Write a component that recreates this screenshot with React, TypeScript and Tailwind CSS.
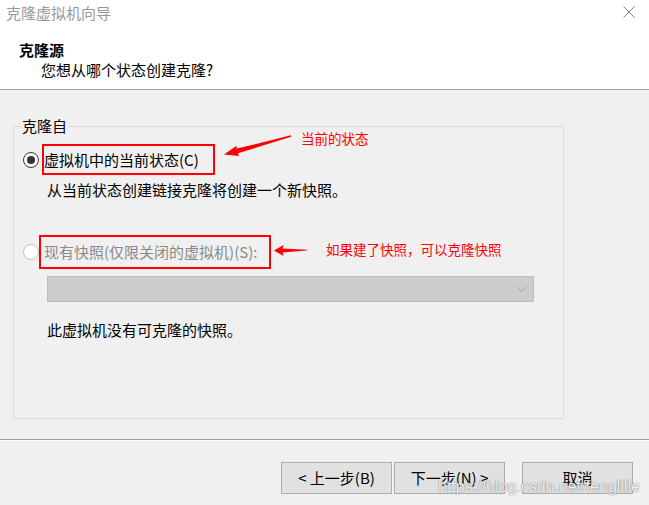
import React from 'react';

function Radio({ checked, disabled }: { checked?: boolean; disabled?: boolean }) {
  return (
    <div
      className={`w-4 h-4 shrink-0 rounded-full flex items-center justify-center ${
        disabled ? 'border border-[#c4c4c4] bg-white' : 'border-[1.5px] border-[#333333] bg-white'
      }`}
    >
      {checked && <div className="w-[8px] h-[8px] rounded-full bg-[#333333]" />}
    </div>
  );
}

function WizardButton({ label }: { label: string }) {
  return (
    <button className="w-[111px] h-[32px] bg-[#e1e1e1] border border-[#adadad] text-[15px] leading-[20px] text-black">
      {label}
    </button>
  );
}

export default function App() {
  return (
    <div className="relative w-[649px] h-[505px] overflow-hidden bg-[#f0f0f0] flex flex-col font-['Noto_Sans_CJK_SC','Liberation_Sans',sans-serif] text-black">
      {/* Header */}
      <div className="h-[90px] shrink-0 bg-white border-b border-[#a0a0a0] flex flex-col">
        <div className="h-[40px] flex items-start justify-between">
          <div className="pl-[6px] pt-[3px] text-[15px] leading-[20px] text-[#999999]">克隆虚拟机向导</div>
          <svg width="12" height="12" viewBox="0 0 12 12" className="mt-[6px] mr-[14px]">
            <path d="M0.5 0.5 L11.5 11.5 M11.5 0.5 L0.5 11.5" stroke="#7a7a7a" strokeWidth="1" fill="none" />
          </svg>
        </div>
        <div className="pl-[19px] text-[15px] leading-[20px] font-bold">克隆源</div>
        <div className="pl-[41px] text-[15px] leading-[20px]">您想从哪个状态创建克隆?</div>
      </div>

      {/* Body */}
      <fieldset className="mt-[26px] ml-[13px] w-[551px] h-[303px] shrink-0 border border-[#dcdcdc] p-0 m-0 text-[15px] leading-[20px]">
        <legend className="ml-[7px] px-[1px] leading-[20px]">克隆自</legend>

        <div className="mt-[8px] ml-[9px] flex items-center">
          <Radio checked />
          <div className="ml-[3px] w-[173px] h-[31px] border-2 border-[#ff0000] flex items-center">
            虚拟机中的当前状态(C)
          </div>
        </div>
        <div className="mt-[5px] ml-[33px]">从当前状态创建链接克隆将创建一个新快照。</div>

        <div className="mt-[35px] ml-[9px] flex items-center">
          <Radio disabled />
          <div className="w-[232px] h-[34px] border-2 border-[#ff0000] pl-[3px] flex items-center text-[#8a8a8a]">
            现有快照(仅限关闭的虚拟机)(S):
          </div>
        </div>
        <div className="mt-[7px] ml-[33px] w-[487px] h-[26px] bg-[#cccccc] border border-[#bdbdbd] flex items-center justify-end pr-[6px]">
          <svg width="11" height="6" viewBox="0 0 11 6">
            <path d="M0.5 0.5 L5.5 5.5 L10.5 0.5" stroke="#a3a3a3" strokeWidth="1" fill="none" />
          </svg>
        </div>
        <div className="mt-[18px] ml-[33px]">此虚拟机没有可克隆的快照。</div>
      </fieldset>

      {/* Separator */}
      <div className="mt-[20px] h-[2px] shrink-0 border-t border-b border-t-[#a0a0a0] border-b-white" />

      {/* Buttons */}
      <div className="mt-[21px] flex justify-end pr-[16px]">
        <WizardButton label="< 上一步(B)" />
        <div className="ml-[2px]">
          <WizardButton label="下一步(N) >" />
        </div>
        <div className="ml-[17px]">
          <WizardButton label="取消" />
        </div>
      </div>

      {/* Annotations */}
      <svg className="absolute inset-0 pointer-events-none" width="649" height="505" viewBox="0 0 649 505">
        <polygon
          points="224,154.5 236.2,146.1 236.9,148.6 290.9,135.3 291.2,136.7 238.1,153.2 238.8,155.9"
          fill="#ff0000"
        />
        <polygon points="274,250.5 283.5,245 282.5,248.5 307,249.8 307,250.6 282.5,252.5 283.5,256" fill="#ff0000" />
      </svg>
      <div className="absolute left-[301px] top-[128px] text-[13.5px] leading-[20px] text-[#ff0000]">当前的状态</div>
      <div className="absolute left-[326px] top-[239px] text-[13.5px] leading-[20px] text-[#ff0000]">
        如果建了快照，可以克隆快照
      </div>
      <div className="absolute left-[438px] top-[477px] text-[16px] leading-[20px] font-['Liberation_Sans',sans-serif] text-white/90 [text-shadow:0_0_1px_rgba(0,0,0,0.55),0_0_2px_rgba(0,0,0,0.2)]">
        https://blog.csdn.net/fenglllle
      </div>
    </div>
  );
}
